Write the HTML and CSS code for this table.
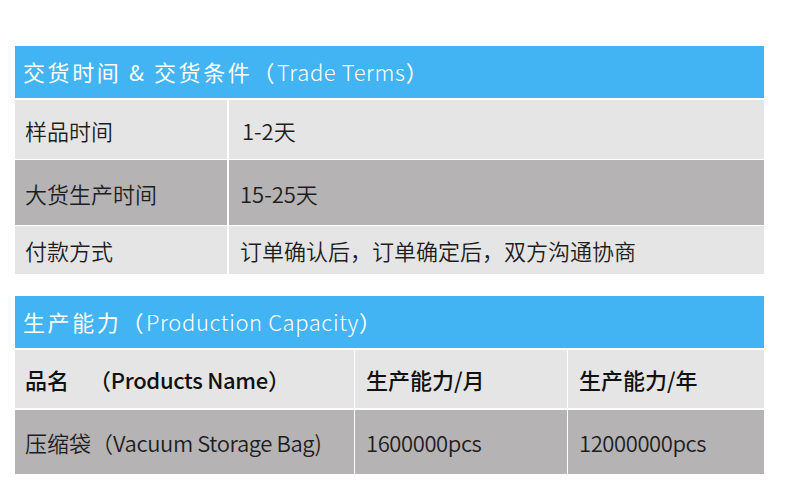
FILE: index.html
```html
<!DOCTYPE html>
<html lang="zh">
<head>
<meta charset="utf-8">
<link rel="stylesheet" href="styles.css">
</head>
<body>
<section class="block terms">
  <div class="title">交货时间 &amp; 交货条件（<span class="latin">Trade Terms</span>）</div>
  <div class="grid grid-terms">
    <div class="cell light">样品时间</div>
    <div class="cell light val1">1-2天</div>
    <div class="cell dark tall">大货生产时间</div>
    <div class="cell dark tall">15-25天</div>
    <div class="cell light short">付款方式</div>
    <div class="cell light short">订单确认后，订单确定后，双方沟通协商</div>
  </div>
</section>
<section class="block capacity">
  <div class="title">生产能力（<span class="latin">Production Capacity</span>）</div>
  <div class="grid grid-cap">
    <div class="cell light head"><span>品名</span><span class="gap">（Products Name）</span></div>
    <div class="cell light head">生产能力/月</div>
    <div class="cell light head">生产能力/年</div>
    <div class="cell dark tall">压缩袋（<span class="num">Vacuum Storage Bag)</span></div>
    <div class="cell dark tall"><span class="num">1600000pcs</span></div>
    <div class="cell dark tall"><span class="num">12000000pcs</span></div>
  </div>
</section>
</body>
</html>
```
FILE: styles.css
```css
html, body {
  margin: 0;
  padding: 0;
  background: #ffffff;
}
body {
  font-family: "Noto Sans CJK SC", "Noto Sans", sans-serif;
  color: #1e1e1e;
  padding: 46px 26px 0 15px;
}
.block {
  width: 749px;
}
.capacity {
  margin-top: 22px;
}
.title {
  height: 52px;
  background: #42b3f3;
  color: #ffffff;
  font-size: 22px;
  font-weight: 400;
  letter-spacing: 2.6px;
  display: flex;
  align-items: center;
  padding-left: 8px;
  padding-bottom: 2px;
  box-sizing: border-box;
  margin-bottom: 2px;
}
.latin {
  font-weight: 300;
  letter-spacing: 0.6px;
}
.grid {
  display: grid;
  column-gap: 2px;
  row-gap: 1px;
}
.grid-terms {
  grid-template-columns: 212px 1fr;
  grid-template-rows: 59px 65px 48px;
}
.grid-cap {
  grid-template-columns: 339px 212px 1fr;
  grid-template-rows: 58px 64px;
  column-gap: 1px;
  row-gap: 2px;
}
.cell {
  display: flex;
  align-items: center;
  padding-left: 10px;
  font-size: 22px;
  font-weight: 350;
  white-space: nowrap;
}
.grid-terms .cell:nth-child(2n) {
  padding-left: 11px;
}
.grid-cap .cell:nth-child(3n+2),
.grid-cap .cell:nth-child(3n) {
  padding-left: 11px;
}
.val1 {
  padding-left: 13px !important;
}
.light {
  background: #e5e5e5;
}
.dark {
  background: #b5b3b4;
}
.head {
  font-weight: 500;
  color: #111111;
}
.gap {
  margin-left: 20px;
  letter-spacing: -0.3px;
}
.num {
  letter-spacing: -0.4px;
}
```
